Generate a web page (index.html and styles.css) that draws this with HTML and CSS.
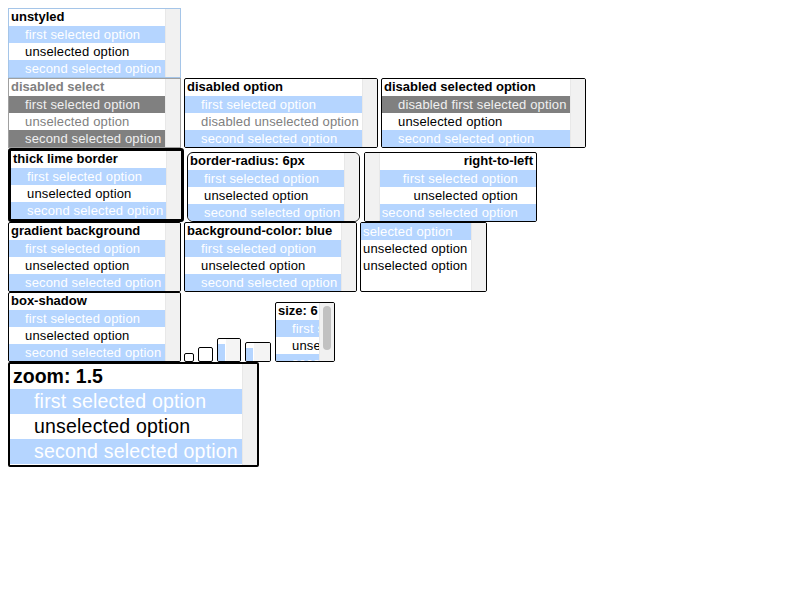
FILE: index.html
```html
<!DOCTYPE html>
<html lang="en">
<head>
    <meta charset="UTF-8">
    <title>select multiple with optgroup</title>
    <link rel="stylesheet" href="styles.css">
</head>
<body>
    <div class="page">
        <div class="row">
            <div class="lb unstyled w173">
                <div class="items">
                    <div class="grp">unstyled</div>
                    <div class="opt sel">first selected option</div>
                    <div class="opt">unselected option</div>
                    <div class="opt sel">second selected option</div>
                </div>
                <div class="track"></div>
            </div>
        </div>

        <div class="row">
            <div class="lb disabled w173">
                <div class="items">
                    <div class="grp">disabled select</div>
                    <div class="opt sel">first selected option</div>
                    <div class="opt">unselected option</div>
                    <div class="opt sel">second selected option</div>
                </div>
                <div class="track"></div>
            </div>
            <div class="lb w194">
                <div class="items">
                    <div class="grp">disabled option</div>
                    <div class="opt sel">first selected option</div>
                    <div class="opt off">disabled unselected option</div>
                    <div class="opt sel">second selected option</div>
                </div>
                <div class="track"></div>
            </div>
            <div class="lb w205">
                <div class="items">
                    <div class="grp">disabled selected option</div>
                    <div class="opt sel off">disabled first selected option</div>
                    <div class="opt">unselected option</div>
                    <div class="opt sel">second selected option</div>
                </div>
                <div class="track"></div>
            </div>
        </div>

        <div class="row">
            <div class="lb thick">
                <div class="items">
                    <div class="grp">thick lime border</div>
                    <div class="opt sel">first selected option</div>
                    <div class="opt">unselected option</div>
                    <div class="opt sel">second selected option</div>
                </div>
                <div class="track"></div>
            </div>
            <div class="lb rounded w173">
                <div class="items">
                    <div class="grp">border-radius: 6px</div>
                    <div class="opt sel">first selected option</div>
                    <div class="opt">unselected option</div>
                    <div class="opt sel">second selected option</div>
                </div>
                <div class="track"></div>
            </div>
            <div class="lb rtl w173" dir="rtl">
                <div class="items">
                    <div class="grp">right-to-left</div>
                    <div class="opt sel">first selected option</div>
                    <div class="opt">unselected option</div>
                    <div class="opt sel">second selected option</div>
                </div>
                <div class="track"></div>
            </div>
        </div>

        <div class="row">
            <div class="lb w173">
                <div class="items">
                    <div class="grp">gradient background</div>
                    <div class="opt sel">first selected option</div>
                    <div class="opt">unselected option</div>
                    <div class="opt sel">second selected option</div>
                </div>
                <div class="track"></div>
            </div>
            <div class="lb w173">
                <div class="items">
                    <div class="grp">background-color: blue</div>
                    <div class="opt sel">first selected option</div>
                    <div class="opt">unselected option</div>
                    <div class="opt sel">second selected option</div>
                </div>
                <div class="track"></div>
            </div>
            <div class="lb flat w127">
                <div class="items">
                    <div class="opt sel">selected option</div>
                    <div class="opt">unselected option</div>
                    <div class="opt">unselected option</div>
                </div>
                <div class="track"></div>
            </div>
        </div>

        <div class="row">
            <div class="lb w173">
                <div class="items">
                    <div class="grp">box-shadow</div>
                    <div class="opt sel">first selected option</div>
                    <div class="opt">unselected option</div>
                    <div class="opt sel">second selected option</div>
                </div>
                <div class="track"></div>
            </div>
            <div class="tiny t1"></div>
            <div class="tiny t2"></div>
            <div class="tiny t3">
                <div class="mini"><div class="mini-sel"></div></div>
                <div class="mini-track"></div>
            </div>
            <div class="tiny t4">
                <div class="mini"><div class="mini-sel"></div></div>
                <div class="mini-track"></div>
            </div>
            <div class="lb size6">
                <div class="items">
                    <div class="grp">size: 6</div>
                    <div class="opt sel">first selected option</div>
                    <div class="opt">unselected option</div>
                    <div class="opt sel">second selected option</div>
                </div>
                <div class="track"><div class="thumb"></div></div>
            </div>
        </div>

        <div class="row">
            <div class="lb zoomed">
                <div class="items">
                    <div class="grp">zoom: 1.5</div>
                    <div class="opt sel">first selected option</div>
                    <div class="opt">unselected option</div>
                    <div class="opt sel">second selected option</div>
                </div>
                <div class="track"></div>
            </div>
        </div>
    </div>
</body>
</html>
```

FILE: styles.css
```css
body {
    margin: 8px;
    background: #fff;
    font-family: "Liberation Sans", Arial, sans-serif;
}

.row {
    display: flex;
    align-items: flex-end;
    gap: 3px;
}

/* list box */
.lb {
    display: flex;
    box-sizing: border-box;
    height: 70px;
    border: 1px solid #000;
    border-radius: 2px;
    background: #fff;
    overflow: hidden;
    font-size: 13px;
    letter-spacing: 0.15px;
    color: #000;
}

.lb .items {
    flex: 1;
    min-width: 0;
    overflow: hidden;
}

.lb .track {
    width: 15px;
    flex-shrink: 0;
    background: #f1f1f1;
    border-left: 1px solid #e8e8e8;
    box-sizing: border-box;
}

.grp {
    height: 17px;
    line-height: 16px;
    padding-left: 2px;
    font-weight: bold;
    letter-spacing: 0;
    white-space: nowrap;
}

.opt {
    height: 17px;
    line-height: 17px;
    padding-left: 16px;
    white-space: nowrap;
}

.opt.sel {
    background: #b5d5ff;
    color: #fff;
}

.opt.off {
    color: #808080;
}

.opt.sel.off {
    background: #808080;
    color: #f0f0f0;
}

.w173 { width: 173px; }
.w194 { width: 194px; }
.w205 { width: 205px; }
.w127 { width: 127px; }

.unstyled {
    border-color: #a5c5e8;
    border-radius: 0;
}

.disabled {
    border-color: #a0a0a0;
    border-radius: 0;
}

.disabled .grp,
.disabled .opt {
    color: #808080;
}

.disabled .opt.sel {
    background: #808080;
    color: #f0f0f0;
}

.thick {
    width: 176px;
    height: 74px;
    border-width: 3px;
    border-radius: 3px;
}

.rounded {
    border-radius: 6px;
}

.rtl {
    margin-left: 1px;
}

.rtl .grp {
    padding-left: 0;
    padding-right: 3px;
}

.rtl .opt {
    padding-left: 0;
    padding-right: 18px;
}

.rtl .track {
    border-left: none;
    border-right: 1px solid #e8e8e8;
}

.flat .opt {
    padding-left: 2px;
}

/* tiny selects */
.tiny {
    display: flex;
    box-sizing: border-box;
    border: 1px solid #000;
    border-radius: 2px;
    background: #fff;
    overflow: hidden;
}

.t1 { width: 10px; height: 9px; margin-left: 0; }
.t2 { width: 15px; height: 15px; margin-left: 1px; }
.t3 { width: 24px; height: 24px; margin-left: 1px; }
.t4 { width: 26px; height: 20px; margin-left: 1px; }

.mini {
    width: 8px;
    padding-top: 5px;
}

.mini-sel {
    width: 7px;
    height: 100%;
    background: #b5d5ff;
}

.mini-track {
    flex: 1;
    background: #f4f4f4;
}

/* size 6 */
.size6 {
    width: 60px;
    height: 60px;
    margin-left: 1px;
}

.size6 .track {
    padding: 3px 2px 0 3px;
}

.thumb {
    width: 8px;
    height: 44px;
    border-radius: 4px;
    background: #c1c1c1;
}

/* zoom 1.5 */
.zoomed {
    width: 251px;
    height: 105px;
    border-width: 2px;
    font-size: 19.5px;
    letter-spacing: 0.2px;
}

.zoomed .grp {
    height: 25px;
    line-height: 24px;
    padding-left: 3px;
}

.zoomed .opt {
    height: 25px;
    line-height: 25px;
    padding-left: 24px;
}
```
